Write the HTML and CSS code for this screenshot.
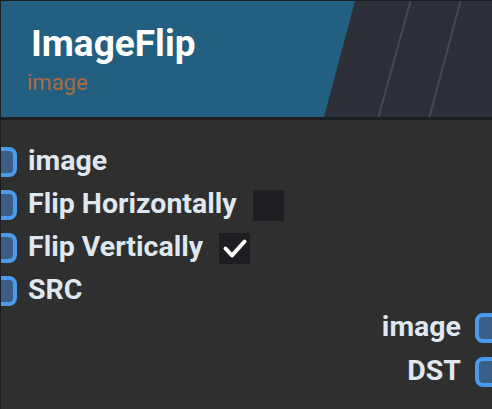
FILE: index.html
```html
<!DOCTYPE html>
<html>
<head>
<meta charset="utf-8">
<link rel="stylesheet" href="styles.css">
</head>
<body>
<div class="node">
  <div class="header">
    <svg class="header-bg" viewBox="0 0 491 116" preserveAspectRatio="none" aria-hidden="true">
      <rect x="0" y="0" width="491" height="116" fill="#2d3038"/>
      <polygon points="0,0 354,0 323,116 0,116" fill="#225f80"/>
      <line x1="409.5" y1="0" x2="377.5" y2="116" stroke="#484b51" stroke-width="1.8"/>
      <line x1="459.5" y1="0" x2="428.5" y2="116" stroke="#484b51" stroke-width="1.8"/>
    </svg>
    <div class="title">ImageFlip</div>
    <div class="subtitle">image</div>
  </div>
  <div class="content">
    <div class="inputs">
      <div class="row"><span class="pin"></span><span class="label">image</span></div>
      <div class="row"><span class="pin"></span><span class="label">Flip Horizontally</span><span class="checkbox"></span></div>
      <div class="row"><span class="pin"></span><span class="label">Flip Vertically</span><span class="checkbox checked"><svg viewBox="0 0 31 31" width="31" height="31"><polyline points="6.5,15.5 13,22.5 25.5,8.5" fill="none" stroke="#ffffff" stroke-width="4" stroke-linecap="round" stroke-linejoin="round"/></svg></span></div>
      <div class="row"><span class="pin"></span><span class="label">SRC</span></div>
    </div>
    <div class="outputs">
      <div class="row out"><span class="label">image</span><span class="pin"></span></div>
      <div class="row out"><span class="label">DST</span><span class="pin"></span></div>
    </div>
  </div>
</div>
</body>
</html>
```
FILE: styles.css
```css
html, body {
  margin: 0;
  padding: 0;
  overflow: hidden;
  background: #1c1e20;
}
.node {
  width: 492px;
  height: 409px;
  box-sizing: border-box;
  border-top: 1px solid #1c1e20;
  border-left: 1px solid #1c1e20;
  background: #2f2f2f;
  overflow: hidden;
  font-family: Roboto, "Liberation Sans", sans-serif;
  display: flex;
  flex-direction: column;
}
.header {
  position: relative;
  flex: none;
  border-bottom: 3px solid #1c1e20;
  padding: 23px 0 0 26px;
  box-sizing: content-box;
  height: 93px;
}
.header-bg {
  position: absolute;
  left: 0;
  top: 0;
  width: 100%;
  height: 100%;
  z-index: 0;
}
.title, .subtitle {
  position: relative;
  z-index: 1;
}
.title {
  font-size: 37px;
  font-weight: 700;
  line-height: 40px;
  color: #ffffff;
  padding-left: 4px;
}
.subtitle {
  margin-top: 6px;
  font-size: 22px;
  font-weight: 400;
  line-height: 26px;
  color: #b06a3e;
}
.content {
  flex: 1;
  padding-top: 27px;
  display: flex;
  flex-direction: column;
}
.inputs {
  display: flex;
  flex-direction: column;
  gap: 13px;
}
.outputs {
  margin-top: 7px;
  display: flex;
  flex-direction: column;
  gap: 14px;
}
.row {
  height: 30px;
  display: flex;
  align-items: center;
}
.row.out {
  justify-content: flex-end;
}
.pin {
  flex: none;
  width: 32px;
  height: 30px;
  box-sizing: border-box;
  border: 4px solid #4a9bee;
  border-radius: 8px;
  background: #3c5d86;
  margin-left: -16px;
}
.row.out .pin {
  margin-left: 14px;
  margin-right: -15px;
}
.label {
  margin-left: 11px;
  font-size: 28.5px;
  font-weight: 700;
  line-height: 30px;
  padding-bottom: 3px;
  color: #dfe7f0;
  white-space: nowrap;
}
.row.out .label {
  margin-left: 0;
}
.checkbox {
  flex: none;
  width: 31px;
  height: 31px;
  margin-left: 16px;
  background: #1c1e22;
  border-radius: 1px;
  display: flex;
}
.checkbox svg {
  display: block;
}
```
